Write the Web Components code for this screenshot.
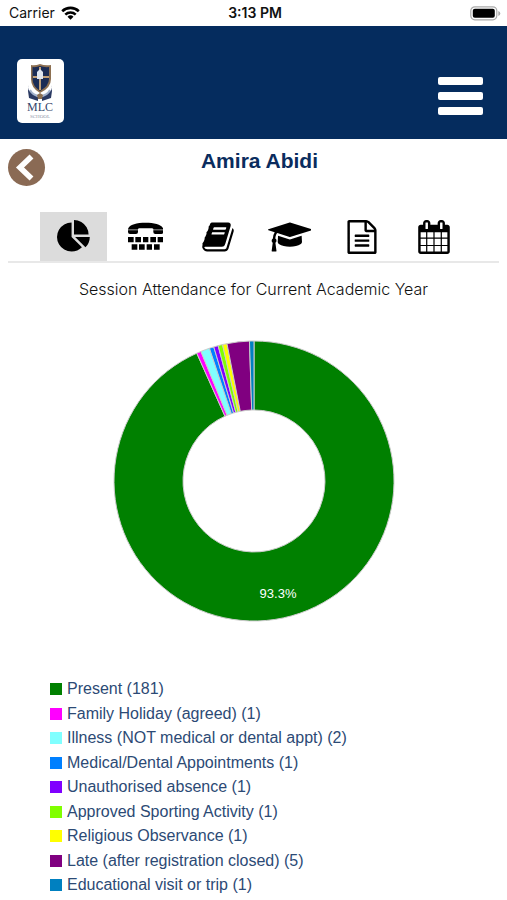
<!DOCTYPE html>
<html lang="en">
<head>
<meta charset="utf-8">
<meta name="viewport" content="width=device-width, initial-scale=1">
<title>Session Attendance</title>
<style>
html, body { margin: 0; background: #fff; }
body { font-family: Inter, "Liberation Sans", sans-serif; color: #000; }
</style>
</head>
<body>
<school-app></school-app>

<script>
const define = (name, markup, setup) => {
  const template = document.createElement('template');
  template.innerHTML = markup;
  customElements.define(name, class extends HTMLElement {
    constructor() {
      super();
      this.attachShadow({ mode: 'open' }).append(template.content.cloneNode(true));
    }
    connectedCallback() { if (setup) setup(this, this.shadowRoot); }
  });
};

const ICONS = {
  pie: ['0 0 1792 1792', '<path d="M768 890l546 546q-106 108-247.5 168t-298.5 60q-209 0-385.5-103t-279.5-279.5-103-385.5 103-385.5 279.5-279.5 385.5-103v762zm187 6h773q0 157-60 298.5t-168 247.5zm709-128h-768v-768q209 0 385.5 103t279.5 279.5 103 385.5z"/>'],
  tty: ['0 0 106 102', '<path d="M0 27C4 13 27 8 53 8s49 5 53 19H76C76 23 66 25 53 25s-23-2-23 2zM0 31h30v5q0 6-6 6H6q-6 0-6-6zM76 31h30v5q0 6-6 6H82q-6 0-6-6z"/><path d="M0 27h30v4H0zM76 27h30v4H76z" opacity=".6"/><path d="M0 51h17v16H0zM22 51h17v16H22zM45 51h16v16H45zM67 51h17v16H67zM89 51h17v16H89zM11 73h17v16H11zM33 73h17v16H33zM56 73h16v16H56zM78 73h17v16H78z"/>'],
  book: ['0 0 1792 1792', '<path d="M1703 478q40 57 18 129l-275 906q-19 64-76.5 107.5t-122.5 43.5h-923q-77 0-148.5-53.5t-99.5-131.5q-24-67-2-127 0-4 3-27t4-37q1-8-3-21.5t-3-19.5q2-11 8-21t16.5-23.5 16.5-23.5q23-38 45-91.5t30-91.5q3-10 .5-30t-.5-28q3-11 17-28t17-23q21-36 42-92t25-90q1-9-2.5-32t.5-28q4-13 22-30.5t22-22.5q19-26 42.5-84.5t27.5-96.5q1-8-3-25.5t-2-26.5q2-8 9-18t18-23 17-21q8-12 16.5-30.5t15-35 16-36 19.5-32 26.5-23.5 36-11.5 47.5 5.5l-1 3q38-9 51-9h761q74 0 114 56t18 130l-274 906q-36 119-71.5 153.5t-128.5 34.5h-869q-27 0-38 15-11 16-1 43 24 70 144 70h923q29 0 56-15.5t35-41.5l300-987q7-22 5-57 38 15 59 43zm-1064 2q-4 13 2 22.5t20 9.5h608q13 0 25.5-9.5t16.5-22.5l21-64q4-13-2-22.5t-20-9.5h-608q-13 0-25.5 9.5t-16.5 22.5zm-83 256q-4 13 2 22.5t20 9.5h608q13 0 25.5-9.5t16.5-22.5l21-64q4-13-2-22.5t-20-9.5h-608q-13 0-25.5 9.5t-16.5 22.5z"/>'],
  cap: ['0 0 2304 1792', '<path d="M1774 836l18 316q4 69-82 128t-235 93.5-323 34.5-323-34.5-235-93.5-82-128l18-316 574 181q22 7 48 7t48-7zm530-324q0 23-22 31l-1120 352q-4 1-10 1t-10-1l-652-206q-43 34-71 111.5t-34 178.5q63 36 63 109 0 69-58 107l58 433q2 14-8 25-9 11-24 11h-192q-15 0-24-11-10-11-8-25l58-433q-58-38-58-107 0-73 65-111 11-207 98-330l-333-104q-22-8-22-31t22-31l1120-352q4-1 10-1t10 1l1120 352q22 8 22 31z"/>'],
  file: ['0 0 1792 1792', '<path d="M1596 380q28 28 48 76t20 88v1152q0 40-28 68t-68 28h-1344q-40 0-68-28t-28-68v-1600q0-40 28-68t68-28h896q40 0 88 20t76 48zm-444-244v376h376q-10-29-22-41l-313-313q-12-12-41-22zm384 1528v-1024h-416q-40 0-68-28t-28-68v-416h-768v1536h1280zm-1024-864q0-14 9-23t23-9h704q14 0 23 9t9 23v64q0 14-9 23t-23 9h-704q-14 0-23-9t-9-23v-64zm736 224q14 0 23 9t9 23v64q0 14-9 23t-23 9h-704q-14 0-23-9t-9-23v-64q0-14 9-23t23-9h704zm0 256q14 0 23 9t9 23v64q0 14-9 23t-23 9h-704q-14 0-23-9t-9-23v-64q0-14 9-23t23-9h704z"/>'],
  calendar: ['0 0 1792 1792', '<path d="M192 1664h288v-288h-288v288zm352 0h320v-288h-320v288zm-352-352h288v-320h-288v320zm352 0h320v-320h-320v320zm-352-384h288v-288h-288v288zm736 736h320v-288h-320v288zm-384-736h320v-288h-320v288zm768 736h288v-288h-288v288zm-384-352h320v-320h-320v320zm-352-864v-288q0-13-9.5-22.5t-22.5-9.5h-64q-13 0-22.5 9.5t-9.5 22.5v288q0 13 9.5 22.5t22.5 9.5h64q13 0 22.5-9.5t9.5-22.5zm736 864h288v-320h-288v320zm-384-384h320v-288h-320v288zm384 0h288v-288h-288v288zm32-480v-288q0-13-9.5-22.5t-22.5-9.5h-64q-13 0-22.5 9.5t-9.5 22.5v288q0 13 9.5 22.5t22.5 9.5h64q13 0 22.5-9.5t9.5-22.5zm384-64v1280q0 52-38 90t-90 38h-1408q-52 0-90-38t-38-90v-1280q0-52 38-90t90-38h128v-96q0-66 47-113t113-47h64q66 0 113 47t47 113v96h384v-96q0-66 47-113t113-47h64q66 0 113 47t47 113v96h128q52 0 90 38t38 90z"/>']
};

define('status-bar', `
<style>
:host { display: grid; grid-template-columns: 1fr auto 1fr; align-items: center; height: 26px; padding: 0 6px 0 9px; box-sizing: border-box; font-size: 14px; line-height: 26px; color: #111; }
.left { display: flex; align-items: center; gap: 6px; }
.time { font-size: 14px; font-weight: 600; }
.battery { justify-self: end; }
svg { display: block; }
</style>
<span class="left"><span>Carrier</span>
<svg width="19" height="14" viewBox="0 0 19 14" fill="none" stroke="#000" stroke-width="2.6"><path d="M1.2 5.2a12 12 0 0 1 16.6 0M4.3 8.6a7.6 7.6 0 0 1 10.4 0"/><path d="M9.500 13.700l-3-3a4.300 4.300 0 0 1 6 0z" fill="#000" stroke="none"/></svg></span>
<span class="time">3:13 PM</span>
<svg class="battery" width="31" height="15" viewBox="0 0 31 15"><rect x=".8" y=".8" width="26" height="13" rx="4" fill="#fff" stroke="#aaa" stroke-width="1.200"/><rect x="2.800" y="2.800" width="22" height="9" rx="2" fill="#000"/><path d="M28.300 5v5q2-.6 2-2.500t-2-2.500z" fill="#aaa"/></svg>`);

define('school-logo', `
<style>
:host { display: block; background: #fff; border-radius: 5px; width: 47px; height: 64px; }
svg { display: block; }
text { font-family: "Liberation Serif", serif; fill: #33466b; text-anchor: middle; }
.sub { fill: #8b93a8; }
</style>
<svg width="47" height="64" viewBox="0 0 47 64" role="img" aria-label="MLC School">
<path d="M14 6q4 1 9-1 5 2 11 1v14q0 9-11 14-9-5-9-14z" fill="#8d7052"/>
<path d="M15.500 8q4 .5 7.500-1 4 1.500 9 1v12q0 7-9 12-7.500-5-7.500-12z" fill="#1b2c55"/>
<path d="M22 8h2v23h-2zM16 17h16v2H16z" fill="#c1a078"/>
<path d="M20 13l3-3 3 3v7h-6z" fill="#dfe5ef"/>
<path d="M12 26q-2 5 3 8l6 4v4l-9-3-1-7zM34 26q2 5-3 8l-6 4v4l9-3 1-7z" fill="#2b3a63"/>
<path d="M13 31q3 6 10 6 7 0 10-6" fill="none" stroke="#a3b2cd" stroke-width="2"/>
<path d="M20 36l3-2 3 2-1 4h-4z" fill="#8d7052"/>
<text x="23" y="52" font-size="12">MLC</text>
<text class="sub" x="23" y="59" font-size="5">SCHOOL</text>
</svg>`);

define('app-header', `
<style>
:host { display: flex; justify-content: space-between; align-items: center; background: #052c5e; padding: 33px 24px 16px 17px; }
button { all: unset; display: grid; gap: 7px; width: 45px; margin-top: 10px; cursor: pointer; }
i { height: 8px; border-radius: 2px; background: #fff; }
button:focus-visible { outline: 2px solid #fff; outline-offset: 4px; }
</style>
<school-logo></school-logo>
<button aria-label="Open menu"><i></i><i></i><i></i></button>`);

define('student-heading', `
<style>
:host { display: grid; grid-template-columns: 37px 1fr 25px; align-items: start; padding-top: 10px; }
button { all: unset; display: block; width: 37px; height: 37px; border-radius: 50%; background: #8a6a54; cursor: pointer; }
svg { display: block; }
h1 { margin: 0; font: bold 21px/24px "Liberation Sans", sans-serif; color: #0a2c5e; text-align: center; }
</style>
<button aria-label="Back"><svg width="37" height="37" viewBox="0 0 37 37" fill="none" stroke="#fff" stroke-width="5.600"><path d="M23.500 7.500L12 18.500l11.500 11"/></svg></button>
<h1><slot></slot></h1>`);

define('tab-icon', `
<style>
:host { display: block; }
button { all: unset; box-sizing: border-box; display: flex; justify-content: center; align-items: center; width: 67px; height: 49px; cursor: pointer; }
:host([selected]) button { background: #dcdcdc; }
svg { display: block; height: 34px; fill: #000; }
</style>
<button></button>`, (host, root) => {
  const [box, art] = ICONS[host.getAttribute('icon')];
  const button = root.querySelector('button');
  button.setAttribute('aria-label', host.getAttribute('label'));
  button.innerHTML = `<svg viewBox="${box}" aria-hidden="true">${art}</svg>`;
});

define('tab-strip', `
<style>
:host { display: flex; justify-content: center; gap: 5px; border-bottom: 2px solid #e8e8e8; }
</style>
<slot></slot>`);

const SESSIONS = [
  ['Present', 181, '#008000'],
  ['Family Holiday (agreed)', 1, '#ff00ff'],
  ['Illness (NOT medical or dental appt)', 2, '#80ffff'],
  ['Medical/Dental Appointments', 1, '#0080ff'],
  ['Unauthorised absence', 1, '#8000ff'],
  ['Approved Sporting Activity', 1, '#80ff00'],
  ['Religious Observance', 1, '#ffff00'],
  ['Late (after registration closed)', 5, '#800080'],
  ['Educational visit or trip', 1, '#0080c0']
];

define('donut-chart', `
<style>
:host { display: flex; justify-content: center; }
svg { display: block; width: 282px; max-width: 100%; }
path { stroke: #ccc; stroke-width: 1; }
text { font: 13px "Liberation Sans", sans-serif; fill: #fff; text-anchor: middle; }
</style>
<svg viewBox="-141 -141 282 282" role="img" aria-label="Session attendance"></svg>`, (host, root) => {
  const total = SESSIONS.reduce((sum, s) => sum + s[1], 0);
  const at = (r, share) => {
    const a = share * 2 * Math.PI;
    return `${(r * Math.sin(a)).toFixed(2)} ${(-r * Math.cos(a)).toFixed(2)}`;
  };
  let from = 0, art = '';
  for (const [, count, colour] of SESSIONS) {
    const to = from + count / total, large = to - from > .5 ? 1 : 0;
    art += `<path fill="${colour}" d="M${at(140, from)}A140 140 0 ${large} 1 ${at(140, to)}L${at(71, to)}A71 71 0 ${large} 0 ${at(71, from)}z"/>`;
    from = to;
  }
  const share = SESSIONS[0][1] / total;
  const [x, y] = at(115, share / 2).split(' ');
  art += `<text x="${x}" y="${+y + 5}">${(share * 100).toFixed(1)}%</text>`;
  root.querySelector('svg').innerHTML = art;
});

define('chart-legend', `
<style>
:host { display: flex; }
ul { flex: 1; display: flex; flex-direction: column; justify-content: space-between; list-style: none; margin: 0; padding: 0; }
li { display: flex; align-items: center; gap: 5px; font: 16px/24px "Liberation Sans", sans-serif; color: #2c4a75; }
i { width: 12px; height: 12px; }
</style>
<ul></ul>`, (host, root) => {
  root.querySelector('ul').innerHTML = SESSIONS.map(([name, count, colour]) =>
    `<li><i style="background:${colour}"></i><span>${name} (${count})</span></li>`).join('');
});

define('school-app', `
<style>
:host { display: flex; flex-direction: column; min-height: 100vh; }
main { flex: 1; display: flex; flex-direction: column; padding: 0 8px 3px; }
tab-strip { margin-top: 26px; }
h2 { margin: 14px 0 39px; font-size: 16px; font-weight: 300; line-height: 24px; text-align: center; color: #111; }
chart-legend { flex: 1; margin: 55px 0 0 42px; }
</style>
<status-bar></status-bar>
<app-header></app-header>
<main>
<student-heading>Amira Abidi</student-heading>
<tab-strip>
<tab-icon icon="pie" label="Attendance" selected></tab-icon>
<tab-icon icon="tty" label="Contact"></tab-icon>
<tab-icon icon="book" label="Homework"></tab-icon>
<tab-icon icon="cap" label="Results"></tab-icon>
<tab-icon icon="file" label="Reports"></tab-icon>
<tab-icon icon="calendar" label="Timetable"></tab-icon>
</tab-strip>
<h2>Session Attendance for Current Academic Year</h2>
<donut-chart></donut-chart>
<chart-legend></chart-legend>
</main>`);
</script>
</body>
</html>
